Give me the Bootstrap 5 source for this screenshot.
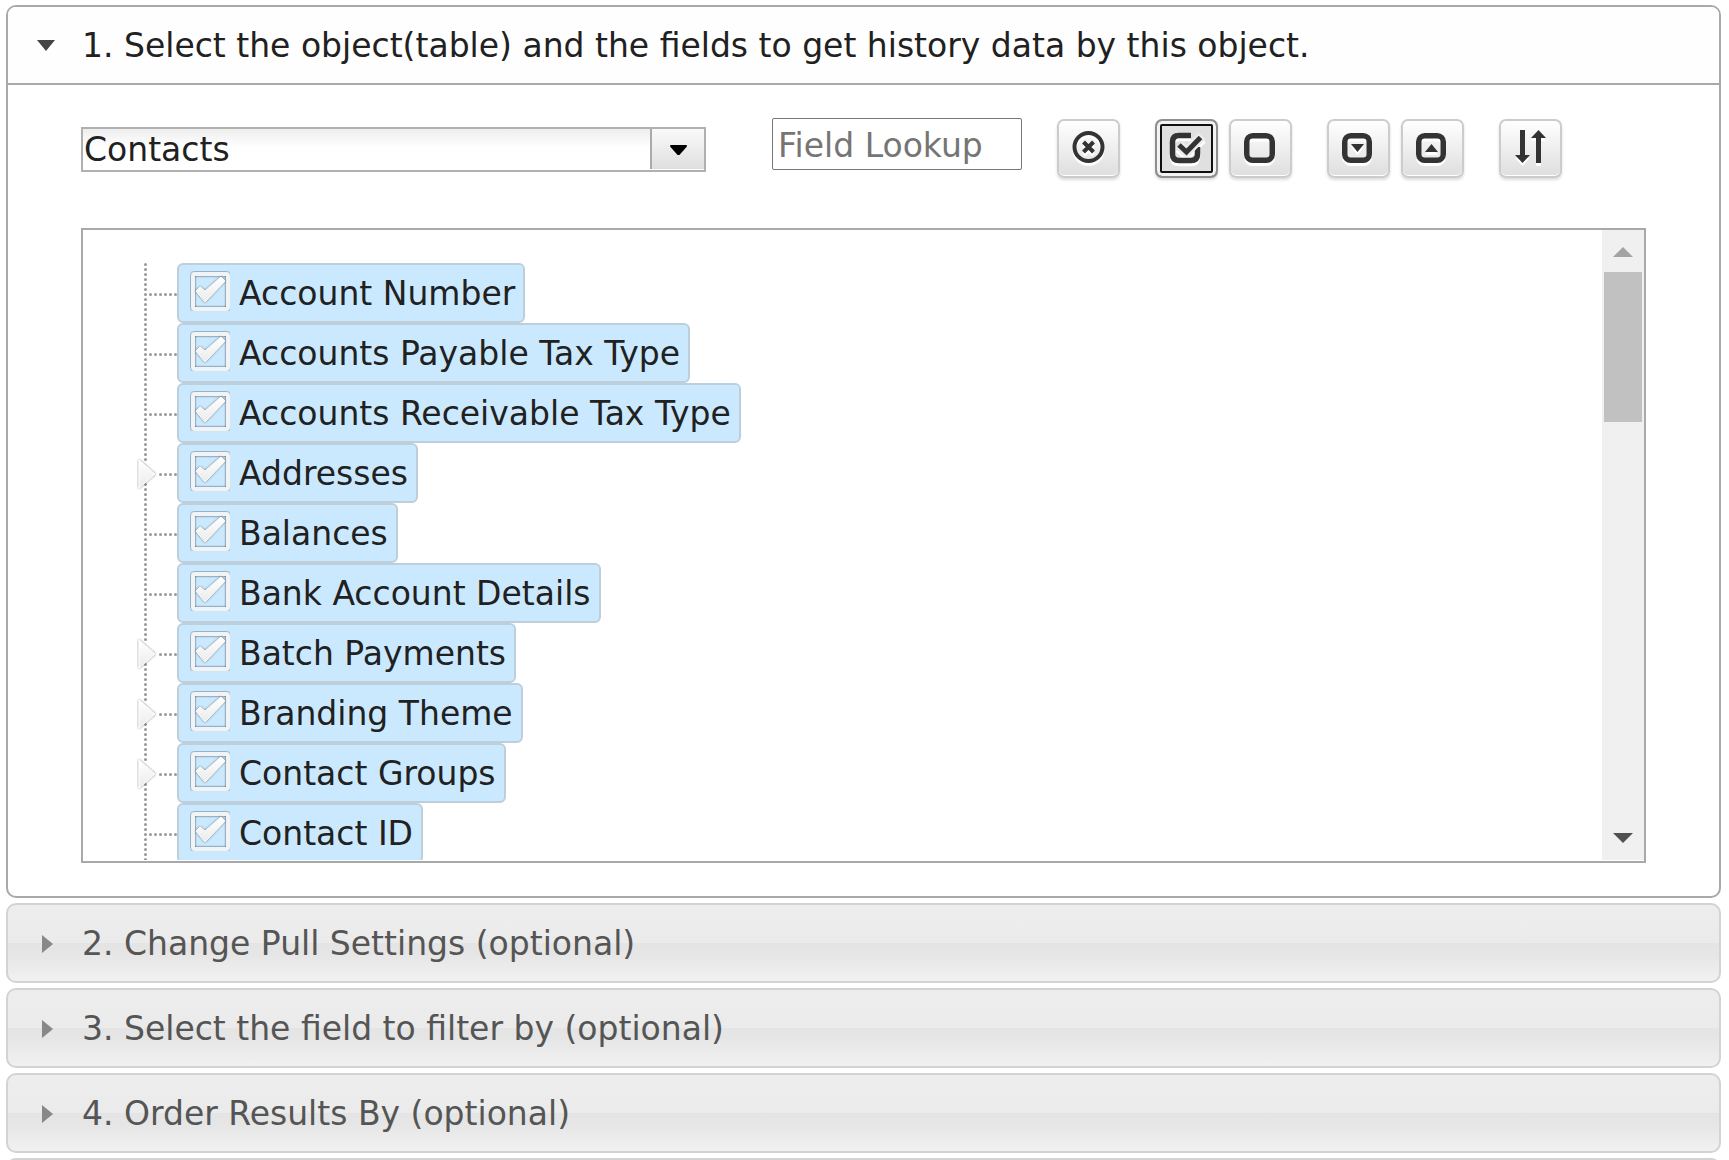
<!DOCTYPE html>
<html lang="en">
<head>
<meta charset="utf-8">
<meta name="viewport" content="width=device-width, initial-scale=1">
<title>History data settings</title>
<link href="https://cdn.jsdelivr.net/npm/bootstrap@5.3.0/dist/css/bootstrap.min.css" rel="stylesheet">
<style>
  body { font-family: "DejaVu Sans", Verdana, sans-serif; font-size: 33px; line-height: 40px; color: #212121; background: #fff; }
  .wizard { gap: 5px; padding: 5px 8px 0 6px; height: 100vh; overflow: hidden; }
  .wizard > * { flex: none; }
  .step-head { width: 100%; height: 80px; padding: 2px 27px 0 29px; gap: 25px; border: 2px solid #d3d3d3; border-radius: 10px; text-align: left; color: #555;
    background: linear-gradient(#ededed 0, #ebebeb 50%, #e4e4e4 50%, #e6e6e6 65%, #f1f1f1 100%); }
  .step-head svg { width: 20px; height: 20px; flex: none; fill: #888; }
  .step-open { border: 2px solid #a9a9a9; border-radius: 10px; }
  .step-open .step-head { height: 78px; border-width: 0 0 2px; border-color: #a9a9a9; border-radius: 8px 8px 0 0; background: #fefefe; color: #212121; }
  .step-open .step-head svg { fill: #454545; }
  .step-body { padding: 33px 73px; }
  .tools { height: 60px; margin-bottom: 50px; }
  .object-box { position: relative; width: 625px; margin: 9px 66px 0 0; }
  .object-box select { appearance: none; display: block; width: 100%; height: 45px; border: 2px solid #b0b0b0; border-radius: 0; padding: 0 60px 0 1px; color: #212121; line-height: 40px; background: linear-gradient(#eee, #fff 45%); outline: 0; }
  .object-arrow { position: absolute; top: 2px; right: 2px; bottom: 3px; width: 54px; padding-top: 2px; border-left: 2px solid #aaa; background: linear-gradient(#fafafa, #dfdfdf); pointer-events: none; }
  .lookup { width: 250px; height: 52px; border: 1px solid #767676; border-radius: 2px; padding: 2px 5px 0; margin-right: 35px; color: #212121; }
  .lookup::placeholder { color: #757575; opacity: 1; }
  .tool { width: 63px; height: 59px; margin-top: 1px; padding: 0; border: 2px solid #ccc; border-radius: 7px; background: linear-gradient(#fff, #dedede); box-shadow: 0 2px 3px rgba(0,0,0,.14), inset 0 -1px #fff; color: #333; }
  .tool svg { width: 39px; height: 39px; overflow: visible; filter: drop-shadow(0 3px 0 #fff); }
  .tool.chosen { border-color: #8f8f8f; background: #e0e0e0; box-shadow: 0 2px 3px rgba(0,0,0,.14), inset 0 0 0 3px #f2f2f2, inset 0 0 0 5px #101010; }
  .pair { gap: 11px; margin-left: 35px; }
  .fields { height: 635px; border: 2px solid #a9a9a9; padding-bottom: 1px; }
  .tree { padding: 33px 0 0 54px; margin: 0; overflow: hidden; min-width: 0; list-style: none; }
  .node { height: 60px; }
  .branch { width: 40px; height: 60px; flex: none; }
  .field-item { height: 60px; gap: 9px; padding: 2px 8px 0 11px; border: 2px solid #bccfdb; border-radius: 6px; background: #cbe9fe; white-space: nowrap; }
  .check-box { position: relative; width: 40px; height: 40px; margin-bottom: 6px; flex: none; }
  .check-box input { appearance: none; display: block; width: 40px; height: 40px; margin: 0; }
  .check-box svg { position: absolute; inset: 0; width: 40px; height: 40px; pointer-events: none; }
  .check-box input:not(:checked) + svg { opacity: .5; }
  .bar { width: 42px; padding: 17px 0; background: #f0f0f0; flex: none; }
  .bar .thumb { width: 38px; height: 150px; margin-top: 15px; background: #c1c1c1; }
  .bar svg { width: 20px; height: 10px; display: block; }
</style>
<script src="https://cdn.jsdelivr.net/npm/bootstrap@5.3.0/dist/js/bootstrap.bundle.min.js"></script>
</head>
<body>
<svg width="0" height="0" class="position-absolute" aria-hidden="true">
  <defs>
    <linearGradient id="lg" x1="0" y1="0" x2="0" y2="1"><stop offset="0" stop-color="#fff"/><stop offset="1" stop-color="#ebebeb"/></linearGradient>
    <filter id="soft" x="-20%" y="-20%" width="140%" height="140%"><feDropShadow dx="0" dy="0" stdDeviation="1.2" flood-color="#345" flood-opacity="1"/></filter>
    <filter id="faint" x="-20%" y="-20%" width="140%" height="140%"><feDropShadow dx="0" dy="0" stdDeviation="1.2" flood-color="#333" flood-opacity=".7"/></filter>
    <symbol id="checked" viewBox="0 0 40 40">
      <rect x="3" y="3" width="35" height="35" rx="2" fill="none" stroke="#f1f3f5" stroke-width="4" filter="url(#soft)"/>
      <path d="M6 20 10 16 15 20 31 6 35 10 15 31Z" fill="url(#lg)" stroke="#fafafa" stroke-linejoin="round" filter="url(#faint)"/>
    </symbol>
    <symbol id="leaf" viewBox="0 0 40 60">
      <g stroke="#999" stroke-width="3" stroke-linecap="round" stroke-dasharray="0 5"><path d="M8.500 1.500V60"/><path d="M13.500 31.500H40"/></g>
    </symbol>
    <symbol id="parent" viewBox="0 0 40 60">
      <g stroke="#999" stroke-width="3" stroke-linecap="round" stroke-dasharray="0 5"><path d="M8.500 1.500V20"/><path d="M8.500 41.500V60"/><path d="M23.500 31.500H40"/></g>
      <path d="M2 17 18 31 2 45Z" fill="url(#lg)" stroke="#fff" filter="url(#faint)"/>
    </symbol>
  </defs>
</svg>

<main class="wizard d-flex flex-column">
  <section class="step-open">
    <button type="button" class="step-head d-flex align-items-center" aria-expanded="true">
      <svg viewBox="0 0 20 20"><path d="M0 4H18L9 15Z"/></svg><span>1. Select the object(table) and the fields to get history data by this object.</span>
    </button>
    <div class="step-body">
      <div class="tools d-flex align-items-start">
        <div class="object-box">
          <select aria-label="Object"><option>Contacts</option></select>
          <span class="object-arrow d-flex align-items-center justify-content-center"><svg width="17" height="11" viewBox="0 0 18 12"><path d="M0 0H18V2L10 11H8L0 2Z"/></svg></span>
        </div>
        <input class="lookup" type="text" placeholder="Field Lookup" aria-label="Field Lookup">
        <button type="button" class="tool d-flex align-items-center justify-content-center" aria-label="Clear"><svg viewBox="0 0 39 39" fill="none" stroke="currentColor"><circle cx="19.500" cy="18" r="14" stroke-width="4"/><path d="M14.500 13 24.500 23M24.500 13 14.500 23" stroke-width="4"/></svg></button>
        <div class="pair d-flex">
          <button type="button" class="tool chosen d-flex align-items-center justify-content-center" aria-label="Check all"><svg viewBox="0 0 39 39" fill="none" stroke="currentColor" stroke-width="5.500"><path d="M24 6.500H12Q5.500 6.500 5.500 13V25Q5.500 31.500 12 31.500H24Q30.500 31.500 30.500 25V18"/><path d="M12 16 19.500 23 35 7" stroke="#ececec" stroke-width="10" stroke-linejoin="round"/><path d="M12 16 19.500 23 33.500 8.500" stroke-width="5"/></svg></button>
          <button type="button" class="tool d-flex align-items-center justify-content-center" aria-label="Uncheck all"><svg viewBox="0 0 39 39" fill="none" stroke="currentColor" stroke-width="5.500"><rect x="5.750" y="6.750" width="25.500" height="24.500" rx="6"/></svg></button>
        </div>
        <div class="pair d-flex">
          <button type="button" class="tool d-flex align-items-center justify-content-center" aria-label="Expand all"><svg viewBox="0 0 39 39" fill="none" stroke="currentColor" stroke-width="5.500"><rect x="5.750" y="6.750" width="24.500" height="24.500" rx="6"/><path d="M12 15H25L18.500 23Z" fill="currentColor" stroke="none"/></svg></button>
          <button type="button" class="tool d-flex align-items-center justify-content-center" aria-label="Collapse all"><svg viewBox="0 0 39 39" fill="none" stroke="currentColor" stroke-width="5.500"><rect x="5.750" y="6.750" width="24.500" height="24.500" rx="6"/><path d="M12 23H25L18.500 15Z" fill="currentColor" stroke="none"/></svg></button>
        </div>
        <div class="pair d-flex">
          <button type="button" class="tool d-flex align-items-center justify-content-center" aria-label="Sort"><svg viewBox="0 0 39 39" fill="currentColor"><path d="M9 1H14V26H19L11.500 34 4 26H9Z"/><path d="M25 34H30V9H35L27.500 1 20 9H25Z"/></svg></button>
        </div>
      </div>

      <div class="fields d-flex">
        <ul class="tree flex-grow-1">
          <li class="node d-flex"><svg class="branch"><use href="#leaf"/></svg><label class="field-item d-flex align-items-center"><span class="check-box"><input type="checkbox" checked><svg><use href="#checked"/></svg></span>Account Number</label></li>
          <li class="node d-flex"><svg class="branch"><use href="#leaf"/></svg><label class="field-item d-flex align-items-center"><span class="check-box"><input type="checkbox" checked><svg><use href="#checked"/></svg></span>Accounts Payable Tax Type</label></li>
          <li class="node d-flex"><svg class="branch"><use href="#leaf"/></svg><label class="field-item d-flex align-items-center"><span class="check-box"><input type="checkbox" checked><svg><use href="#checked"/></svg></span>Accounts Receivable Tax Type</label></li>
          <li class="node d-flex"><svg class="branch"><use href="#parent"/></svg><label class="field-item d-flex align-items-center"><span class="check-box"><input type="checkbox" checked><svg><use href="#checked"/></svg></span>Addresses</label></li>
          <li class="node d-flex"><svg class="branch"><use href="#leaf"/></svg><label class="field-item d-flex align-items-center"><span class="check-box"><input type="checkbox" checked><svg><use href="#checked"/></svg></span>Balances</label></li>
          <li class="node d-flex"><svg class="branch"><use href="#leaf"/></svg><label class="field-item d-flex align-items-center"><span class="check-box"><input type="checkbox" checked><svg><use href="#checked"/></svg></span>Bank Account Details</label></li>
          <li class="node d-flex"><svg class="branch"><use href="#parent"/></svg><label class="field-item d-flex align-items-center"><span class="check-box"><input type="checkbox" checked><svg><use href="#checked"/></svg></span>Batch Payments</label></li>
          <li class="node d-flex"><svg class="branch"><use href="#parent"/></svg><label class="field-item d-flex align-items-center"><span class="check-box"><input type="checkbox" checked><svg><use href="#checked"/></svg></span>Branding Theme</label></li>
          <li class="node d-flex"><svg class="branch"><use href="#parent"/></svg><label class="field-item d-flex align-items-center"><span class="check-box"><input type="checkbox" checked><svg><use href="#checked"/></svg></span>Contact Groups</label></li>
          <li class="node d-flex"><svg class="branch"><use href="#leaf"/></svg><label class="field-item d-flex align-items-center"><span class="check-box"><input type="checkbox" checked><svg><use href="#checked"/></svg></span>Contact ID</label></li>
        </ul>
        <div class="bar d-flex flex-column align-items-center" aria-hidden="true">
          <svg viewBox="0 0 20 10"><path d="M0 10 10 0 20 10Z" fill="#a3a3a3"/></svg>
          <div class="thumb"></div>
          <svg class="mt-auto" viewBox="0 0 20 10"><path d="M0 0H20L10 10Z" fill="#505050"/></svg>
        </div>
      </div>
    </div>
  </section>
  <button type="button" class="step-head d-flex align-items-center" aria-expanded="false"><svg viewBox="0 0 20 20"><path d="M5 1 16 10 5 19Z"/></svg><span>2. Change Pull Settings (optional)</span></button>
  <button type="button" class="step-head d-flex align-items-center" aria-expanded="false"><svg viewBox="0 0 20 20"><path d="M5 1 16 10 5 19Z"/></svg><span>3. Select the field to filter by (optional)</span></button>
  <button type="button" class="step-head d-flex align-items-center" aria-expanded="false"><svg viewBox="0 0 20 20"><path d="M5 1 16 10 5 19Z"/></svg><span>4. Order Results By (optional)</span></button>
  <div class="step-head"></div>
</main>
</body>
</html>
